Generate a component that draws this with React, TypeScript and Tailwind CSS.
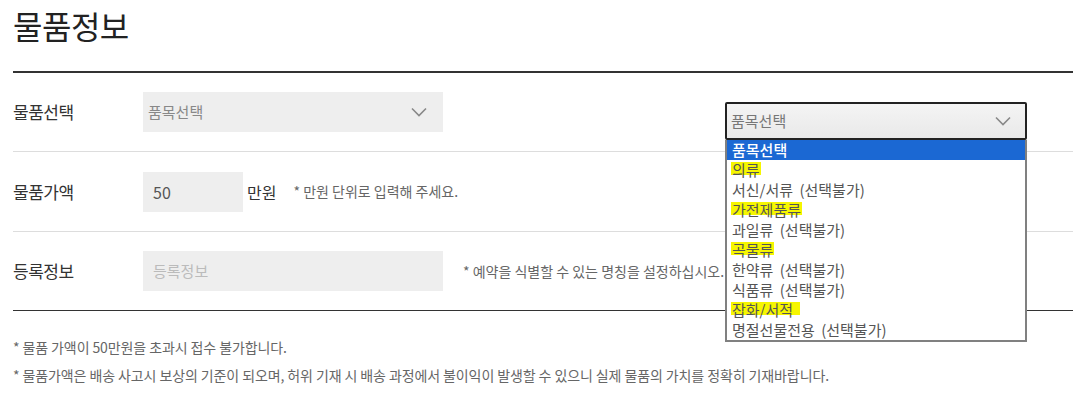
import React from "react";

const font = { fontFamily: '"Noto Sans CJK KR", "Noto Sans", sans-serif' };

function Chevron({ className }: { className?: string }) {
  return (
    <svg className={className} width="16" height="10" viewBox="0 0 16 10" fill="none">
      <path d="M1 1.5 L8 8.5 L15 1.5" stroke="#888" strokeWidth="1.6" />
    </svg>
  );
}

const options: { label: string; mark?: boolean }[] = [
  { label: "품목선택" },
  { label: "의류", mark: true },
  { label: "서신/서류 (선택불가)" },
  { label: "가전제품류", mark: true },
  { label: "과일류 (선택불가)" },
  { label: "곡물류", mark: true },
  { label: "한약류 (선택불가)" },
  { label: "식품류 (선택불가)" },
  { label: "잡화/서적 ", mark: true },
  { label: "명절선물전용 (선택불가)" },
];

export default function App() {
  return (
    <div className="relative w-[1086px] h-[411px] bg-white" style={font}>
      <div className="px-[13px]">
        <h1 className="pt-[5px] pb-[26px] text-[32px] leading-[40px] text-[#222] font-normal tracking-[-0.5px]">
          물품정보
        </h1>
        <div className="border-t-2 border-[#333]">
          <div className="flex items-center h-[79px] border-b border-[#ddd]">
            <div className="w-[130px] text-[17px] text-[#333] tracking-[-0.5px]">물품선택</div>
            <div className="flex items-center justify-between w-[300px] h-[40px] bg-[#eeeeee] pl-[5px] pr-[16px]">
              <span className="text-[15px] text-[#888]">품목선택</span>
              <Chevron />
            </div>
          </div>
          <div className="flex items-center h-[80px] border-b border-[#ddd]">
            <div className="w-[130px] text-[17px] text-[#333] tracking-[-0.5px]">물품가액</div>
            <div className="flex items-center w-[100px] h-[40px] bg-[#eeeeee] pl-[10px] text-[16px] text-[#555]">50</div>
            <span className="ml-[4px] text-[16px] text-[#333]">만원</span>
            <span className="ml-[17px] text-[14px] text-[#666] tracking-[0px]">* 만원 단위로 입력해 주세요.</span>
          </div>
          <div className="flex items-center h-[79px] border-b border-[#333]">
            <div className="w-[130px] text-[17px] text-[#333] tracking-[-0.5px]">등록정보</div>
            <div className="flex items-center w-[300px] h-[40px] bg-[#eeeeee] pl-[10px] text-[15px] text-[#bbb]">등록정보</div>
            <span className="ml-[20px] text-[14px] text-[#666] tracking-[0px]">* 예약을 식별할 수 있는 명칭을 설정하십시오.</span>
          </div>
        </div>
        <div className="mt-[22px] text-[14px] leading-[28px] text-[#666] tracking-[-0.1px]">
          <p>* 물품 가액이 50만원을 초과시 접수 불가합니다.</p>
          <p>* 물품가액은 배송 사고시 보상의 기준이 되오며, 허위 기재 시 배송 과정에서 불이익이 발생할 수 있으니 실제 물품의 가치를 정확히 기재바랍니다.</p>
        </div>
      </div>

      <div className="absolute left-[725px] top-[102px] w-[302px]">
        <div className="flex items-center justify-between h-[38px] border-2 border-[#222] rounded-[2px] bg-[linear-gradient(to_bottom,#f4f4f4,#e9e9e9)] pl-[4px] pr-[14px]">
          <span className="text-[15px] text-[#777]">품목선택</span>
          <Chevron />
        </div>
        <div className="border-2 border-t-0 border-[#808080] bg-white">
          {options.map((o, i) => (
            <div
              key={i}
              className={
                i === 0
                  ? "h-[20px] leading-[20px] pl-[5px] text-[15px] font-medium text-white bg-[#1b68d3] [word-spacing:3px]"
                  : "h-[20px] leading-[20px] pl-[5px] text-[15px] text-[#555] [word-spacing:3px]"
              }
            >
              {o.mark ? (
                <span className="inline-block whitespace-pre px-[1px] -ml-[1px] bg-[linear-gradient(to_bottom,transparent_2px,#f6f600_2px,#f6f600_15px,transparent_15px)]">
                  {o.label}
                </span>
              ) : (
                <span className="whitespace-pre">{o.label}</span>
              )}
            </div>
          ))}
        </div>
      </div>
    </div>
  );
}
